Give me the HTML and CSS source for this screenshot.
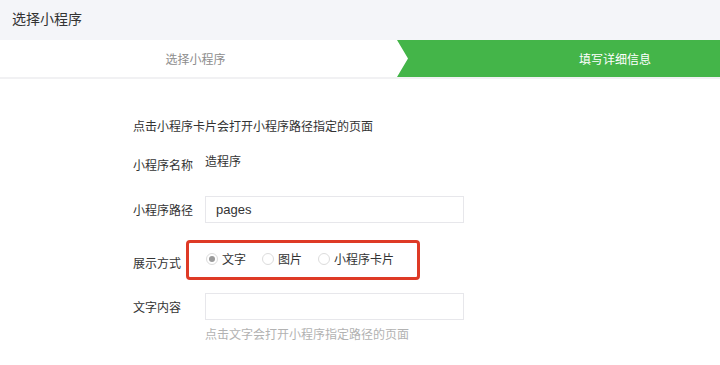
FILE: index.html
```html
<!DOCTYPE html>
<html lang="zh-CN">
<head>
<meta charset="utf-8">
<title>选择小程序</title>
<link rel="stylesheet" href="styles.css">
</head>
<body>
<div class="header">选择小程序</div>
<div class="steps">
  <div class="step step-done">选择小程序</div>
  <div class="step step-current">填写详细信息</div>
</div>
<div class="form">
  <div class="intro">点击小程序卡片会打开小程序路径指定的页面</div>
  <div class="row row-top">
    <div class="label">小程序名称</div>
    <div class="value">造程序</div>
  </div>
  <div class="row row-input">
    <div class="label">小程序路径</div>
    <div class="input">pages</div>
  </div>
  <div class="row row-top row-radio">
    <div class="label">展示方式</div>
    <div class="radios">
      <span class="radio"><span class="circle checked"></span>文字</span>
      <span class="radio"><span class="circle"></span>图片</span>
      <span class="radio"><span class="circle"></span>小程序卡片</span>
      <span class="mark"></span>
    </div>
  </div>
  <div class="row row-input row-text">
    <div class="label">文字内容</div>
    <div class="input"></div>
  </div>
  <div class="hint">点击文字会打开小程序指定路径的页面</div>
</div>
</body>
</html>
```
FILE: styles.css
```css
* { box-sizing: border-box; }
body {
  margin: 0;
  font-family: "Noto Sans CJK SC", "Liberation Sans", sans-serif;
  font-size: 12px;
  color: #353535;
  background: #fff;
}
.header {
  height: 40px;
  line-height: 36px;
  padding-left: 12px;
  font-size: 14px;
  color: #333;
  background: #f4f5f9;
}
.steps {
  display: flex;
  height: 39px;
  border-bottom: 2px solid #f1f1f3;
}
.step {
  display: flex;
  align-items: center;
  justify-content: center;
  font-size: 12px;
}
.step-done {
  width: 397px;
  padding-right: 6px;
  color: #8d8d8d;
  background: #fff;
}
.step-current {
  flex: 1;
  color: #fff;
  background: #44b549;
  clip-path: polygon(0 0, 100% 0, 100% 100%, 0 100%, 11px 50%);
  padding-left: 113px;
}
.form {
  padding: 37px 0 0 133px;
}
.intro {
  line-height: 20px;
  color: #333;
}
.row {
  display: flex;
  align-items: center;
}
.row-top {
  align-items: flex-start;
  margin-top: 19px;
}
.label {
  width: 72px;
  line-height: 20px;
  color: #333;
}
.value {
  line-height: 12px;
  color: #333;
}
.row-input {
  margin-top: 21px;
}
.input {
  width: 259px;
  height: 27px;
  border: 1px solid #e7e7eb;
  padding-left: 10px;
  line-height: 25px;
  font-family: "Liberation Sans", sans-serif;
  font-size: 13px;
  color: #333;
}
.row-radio {
  margin-top: 30px;
}
.radios {
  position: relative;
  display: flex;
  line-height: 12px;
}
.radio {
  display: flex;
  align-items: center;
  margin-right: 15px;
  color: #333;
}
.circle {
  width: 12px;
  height: 12px;
  margin: 0 4px 0 1px;
  border: 1px solid #dcdcdc;
  border-radius: 50%;
  display: flex;
  align-items: center;
  justify-content: center;
}
.circle.checked::after {
  content: "";
  width: 6px;
  height: 6px;
  border-radius: 50%;
  background: #9a9a9a;
}
.mark {
  position: absolute;
  left: -19px;
  top: -13px;
  width: 234px;
  height: 40px;
  border: 3px solid #de3a26;
  border-radius: 4px;
}
.row-text {
  margin-top: 20px;
}
.hint {
  margin: 4px 0 0 72px;
  line-height: 20px;
  color: #b2b2b2;
}
```
